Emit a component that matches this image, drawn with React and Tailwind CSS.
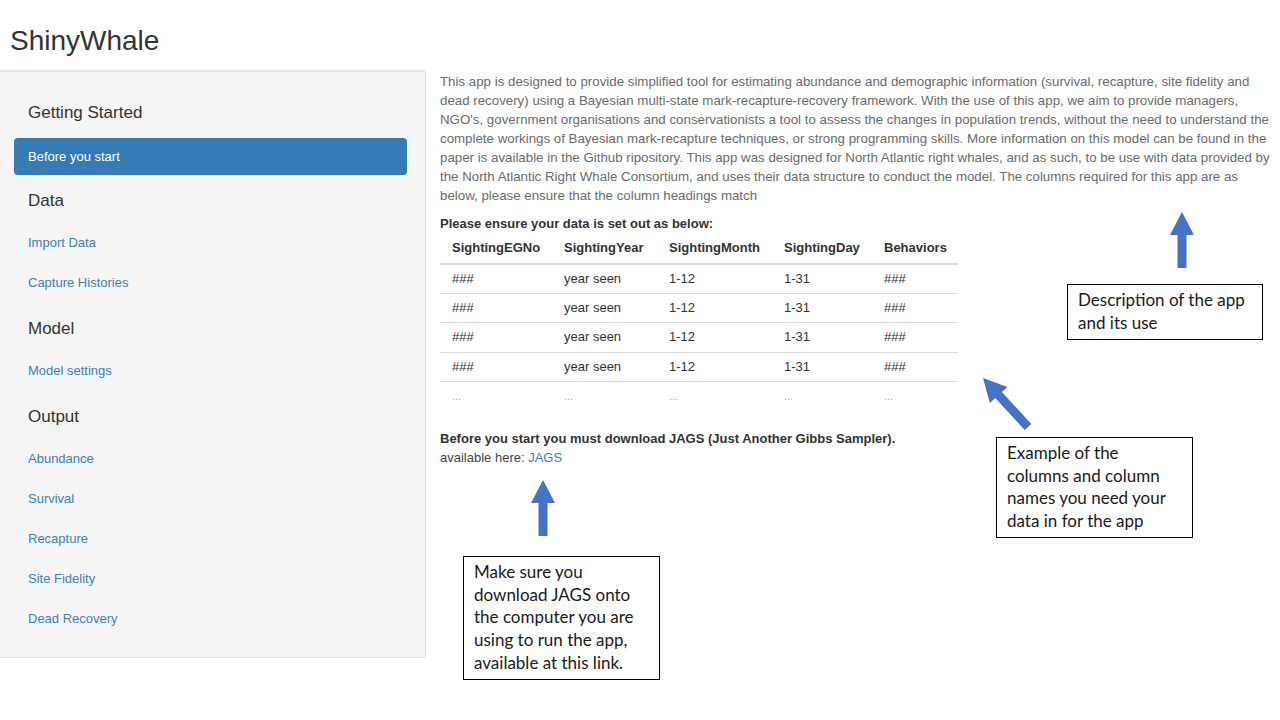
import React from 'react';

const sections = [
    { title: 'Data', links: ['Import Data', 'Capture Histories'] },
    { title: 'Model', links: ['Model settings'] },
    { title: 'Output', links: ['Abundance', 'Survival', 'Recapture', 'Site Fidelity', 'Dead Recovery'] },
];

const columns = [
    { name: 'SightingEGNo', w: 'w-[112px]', v: '###' },
    { name: 'SightingYear', w: 'w-[105px]', v: 'year seen' },
    { name: 'SightingMonth', w: 'w-[115px]', v: '1-12' },
    { name: 'SightingDay', w: 'w-[100px]', v: '1-31' },
    { name: 'Behaviors', w: 'w-[86px]', v: '###' },
];

const Callout = ({ className, lines }) => (
    <div className={`absolute border border-black bg-white pl-[10px] pt-[4px] font-['Lato',sans-serif] text-[17px] leading-[22.7px] text-[#1a1a1a] ${className}`}>
        {lines.map((l) => (
            <div key={l} className="whitespace-nowrap">{l}</div>
        ))}
    </div>
);

export default function App() {
    return (
        <div className="relative w-[1280px] h-[720px] overflow-hidden bg-white font-['Liberation_Sans',Arial,sans-serif] text-[#333]">
            <h2 className="h-[70px] pl-[10px] pt-[23px] text-[28px] leading-[36px] text-[#333]">ShinyWhale</h2>

            <div className="flex">
                {/* Sidebar */}
                <aside className="w-[426px] h-[588px] shrink-0 bg-[#f5f5f5] border border-l-0 border-[#e3e3e3] rounded-r shadow-[inset_0_1px_1px_rgba(0,0,0,0.05)] pl-[14px] pr-[18px] pt-[22px]">
                    <div className="h-[40px] flex items-center pl-[14px] text-[17px] text-[#333]">Getting Started</div>
                    <div className="mt-[5px] h-[37px] flex items-center pl-[14px] bg-[#337ab7] rounded text-[13px] text-white">Before you start</div>
                    {sections.map((s) => (
                        <div key={s.title}>
                            <div className="mt-[6px] h-[40px] flex items-center pl-[14px] text-[17px] text-[#333]">{s.title}</div>
                            <div className="mt-[2px]">
                                {s.links.map((l) => (
                                    <div key={l} className="h-[40px] flex items-center pl-[14px] text-[13px] text-[#3a7fc0]">{l}</div>
                                ))}
                            </div>
                        </div>
                    ))}
                </aside>

                {/* Main panel */}
                <main className="pl-[14px] pt-[1.5px] text-[13px] leading-[19px]">
                    <p className="text-[13.3px] text-[#6b6b6b] whitespace-nowrap">
                        This app is designed to provide simplified tool for estimating abundance and demographic information (survival, recapture, site fidelity and<br />
                        dead recovery) using a Bayesian multi-state mark-recapture-recovery framework. With the use of this app, we aim to provide managers,<br />
                        NGO's, government organisations and conservationists a tool to assess the changes in population trends, without the need to understand the<br />
                        complete workings of Bayesian mark-recapture techniques, or strong programming skills. More information on this model can be found in the<br />
                        paper is available in the Github ripository. This app was designed for North Atlantic right whales, and as such, to be use with data provided by<br />
                        the North Atlantic Right Whale Consortium, and uses their data structure to conduct the model. The columns required for this app are as<br />
                        below, please ensure that the column headings match
                    </p>
                    <p className="mt-[9px] font-bold text-[#333]">Please ensure your data is set out as below:</p>

                    <table className="table-fixed w-[518px] text-left">
                        <thead>
                            <tr className="h-[31px] border-b-2 border-[#ddd]">
                                {columns.map((c) => (
                                    <th key={c.name} className={`${c.w} pl-[12px] font-bold text-[#333]`}>{c.name}</th>
                                ))}
                            </tr>
                        </thead>
                        <tbody>
                            {[0, 1, 2, 3].map((r) => (
                                <tr key={r} className="h-[29.5px] border-b border-[#ddd]">
                                    {columns.map((c) => (
                                        <td key={c.name} className="pl-[12px] pb-[1px] text-[#333]">{c.v}</td>
                                    ))}
                                </tr>
                            ))}
                            <tr className="h-[30px]">
                                {columns.map((c) => (
                                    <td key={c.name} className="pl-[12px] text-[#aaa] text-[11px]">...</td>
                                ))}
                            </tr>
                        </tbody>
                    </table>

                    <p className="mt-[17px] font-bold text-[#333]">Before you start you must download JAGS (Just Another Gibbs Sampler).</p>
                    <p className="text-[#444]">available here: <span className="text-[#3a7fc0]">JAGS</span></p>
                </main>
            </div>

            {/* Annotation arrows */}
            <svg className="absolute inset-0 pointer-events-none" width="1280" height="720" viewBox="0 0 1280 720">
                <polygon fill="#4472c4" points="1182,212 1194,235 1186.5,235 1186.5,268 1177.5,268 1177.5,235 1170,235" />
                <polygon fill="#4472c4" points="983,378 1007.4,386.9 1001.9,392 1031.3,424 1024.7,430 995.3,398 989.8,403.1" />
                <polygon fill="#4472c4" points="543,480 555,503 547.5,503 547.5,536 538.5,536 538.5,503 531,503" />
            </svg>

            <Callout className="left-[1067px] top-[284px] w-[196px] h-[56px]" lines={['Description of the app', 'and its use']} />
            <Callout className="left-[996px] top-[437px] w-[197px] h-[101px]" lines={['Example of the', 'columns and column', 'names you need your', 'data in for the app']} />
            <Callout className="left-[463px] top-[556px] w-[197px] h-[124px]" lines={['Make sure you', 'download JAGS onto', 'the computer you are', 'using to run the app,', 'available at this link.']} />
        </div>
    );
}
